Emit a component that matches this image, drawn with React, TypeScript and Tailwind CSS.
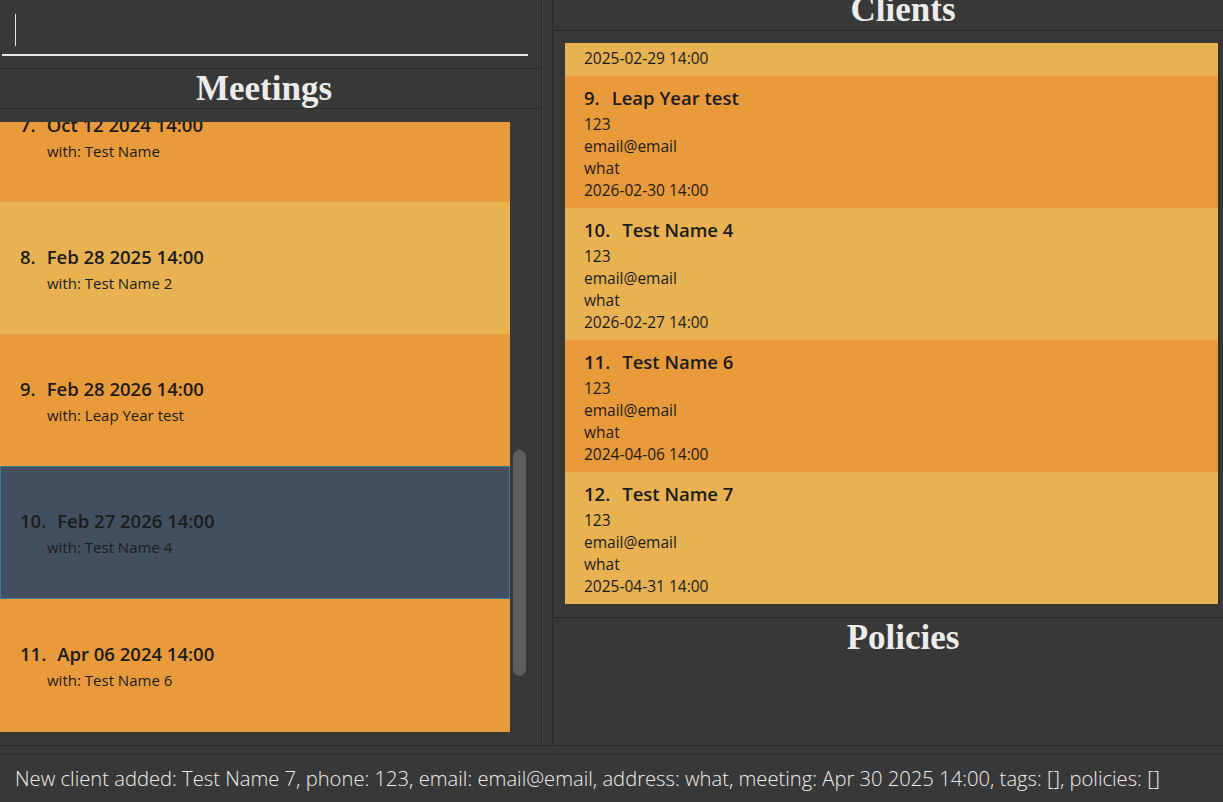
import React from 'react';

interface Meeting {
    idx: number;
    date: string;
    who: string;
}

interface Client {
    idx: number;
    name: string;
    phone: string;
    email: string;
    address: string;
    meeting: string;
}

const meetings: Meeting[] = [
    { idx: 7, date: 'Oct 12 2024 14:00', who: 'Test Name' },
    { idx: 8, date: 'Feb 28 2025 14:00', who: 'Test Name 2' },
    { idx: 9, date: 'Feb 28 2026 14:00', who: 'Leap Year test' },
    { idx: 10, date: 'Feb 27 2026 14:00', who: 'Test Name 4' },
    { idx: 11, date: 'Apr 06 2024 14:00', who: 'Test Name 6' },
];

const clients: Client[] = [
    { idx: 8, name: 'Test Name 2', phone: '123', email: 'email@email', address: 'what', meeting: '2025-02-29 14:00' },
    { idx: 9, name: 'Leap Year test', phone: '123', email: 'email@email', address: 'what', meeting: '2026-02-30 14:00' },
    { idx: 10, name: 'Test Name 4', phone: '123', email: 'email@email', address: 'what', meeting: '2026-02-27 14:00' },
    { idx: 11, name: 'Test Name 6', phone: '123', email: 'email@email', address: 'what', meeting: '2024-04-06 14:00' },
    { idx: 12, name: 'Test Name 7', phone: '123', email: 'email@email', address: 'what', meeting: '2025-04-31 14:00' },
];

const cardFont = { fontFamily: '"Open Sans", "Noto Sans", sans-serif' };

const MeetingCard: React.FC<{ m: Meeting; i: number; selected: boolean }> = ({ m, i, selected }) => {
    const bg = selected
        ? 'bg-[#434e60] border border-[#3b7d99] pt-[42px] pl-[19px]'
        : i % 2 === 0
        ? 'bg-[#e99a3b] pt-[43px] pl-[20px]'
        : 'bg-[#e8b152] pt-[43px] pl-[20px]';
    // the last two rows are a pixel taller in the reference
    const h = i >= 3 ? 'h-[133px]' : 'h-[132px]';
    return (
        <div className={`${h} text-[#1b1b1b] ${bg}`}>
            <div className="text-[18.5px] font-semibold leading-[24px] whitespace-pre">
                <span className="mr-[11px]">{m.idx}.</span>
                {m.date}
            </div>
            <div className="pl-[27px] mt-[4px] text-[15px] leading-[20px]">with: {m.who}</div>
        </div>
    );
};

const ClientCard: React.FC<{ c: Client; i: number }> = ({ c, i }) => (
    <div className={`h-[132px] pl-[19px] pt-[10px] text-[#1b1b1b] ${i % 2 === 0 ? 'bg-[#e8b152]' : 'bg-[#e99a3b]'}`}>
        <div className="text-[18.5px] font-semibold leading-[24px] whitespace-pre">
            <span className="mr-[12px]">{c.idx}.</span>
            {c.name}
        </div>
        <div className="mt-[3px] text-[15.5px] leading-[22px]">
            <div>{c.phone}</div>
            <div>{c.email}</div>
            <div>{c.address}</div>
            <div>{c.meeting}</div>
        </div>
    </div>
);

const Title: React.FC<{ text: string; extra?: string }> = ({ text, extra }) => (
    <div
        className={`h-[40px] text-center text-[35px] font-bold leading-[40px] text-[#ececec] ${extra || ''}`}
        style={{ fontFamily: '"Liberation Serif", "Times New Roman", serif' }}
    >
        {text}
    </div>
);

export default function App() {
    return (
        <div className="w-[1223px] h-[802px] bg-[#383838] flex flex-col overflow-hidden" style={cardFont}>
            <div className="flex h-[745px]">
                {/* left: command box + meetings */}
                <div className="w-[542px] flex flex-col border-r border-[#2a2a2a]">
                    <div className="h-[69px] border-b border-[#2a2a2a] pl-[2px] pt-[14px]">
                        <div className="w-[526px] h-[42px] border-b-2 border-[#e6e6e6] pl-[13px]">
                            <div className="w-[1px] h-[32px] bg-[#e6e6e6]" />
                        </div>
                    </div>
                    <div className="h-[40px] border-b border-[#2a2a2a] overflow-hidden">
                        <Title text="Meetings" extra="w-[528px]" />
                    </div>
                    <div className="flex pt-[13px]">
                        <div className="w-[510px] h-[610px] overflow-hidden">
                            <div className="-mt-[52px]">
                                {meetings.map((m, i) => (
                                    <MeetingCard key={m.idx} m={m} i={i} selected={m.idx === 10} />
                                ))}
                            </div>
                        </div>
                        <div className="flex-1 pl-[3px] pt-[328px]">
                            <div className="w-[13px] h-[226px] rounded-full bg-[#5e5e5e]" />
                        </div>
                    </div>
                </div>

                {/* splitter */}
                <div className="w-[10px] border-l border-[#444444] bg-[#393939]" />

                {/* right: clients + policies */}
                <div className="flex-1 flex flex-col border-l border-[#2a2a2a] overflow-hidden">
                    <div className="h-[31px] border-b border-[#2a2a2a] overflow-hidden">
                        <Title text="Clients" extra="-mt-[10px] pl-[30px]" />
                    </div>
                    <div className="h-[587px] border-b border-[#2a2a2a] pl-[12px] pt-[12px]">
                        <div className="w-[655px] h-[561px] overflow-hidden border-r-2 border-[#2f2f2f]">
                            <div className="-mt-[99px]">
                                {clients.map((c, i) => (
                                    <ClientCard key={c.idx} c={c} i={i} />
                                ))}
                            </div>
                        </div>
                    </div>
                    <Title text="Policies" extra="pl-[30px]" />
                </div>
            </div>

            {/* result display */}
            <div className="border-t border-[#2a2a2a] h-[9px]" />
            <div className="flex-1 border-t border-[#2a2a2a] pl-[15px] pt-[10px]">
                <div className="text-[20.2px] font-light leading-[26px] text-[#f0f0f0] whitespace-pre">
                    New client added: Test Name 7, phone: 123, email: email@email, address: what, meeting: Apr 30 2025 14:00, tags: [], policies: []
                </div>
            </div>
        </div>
    );
}
